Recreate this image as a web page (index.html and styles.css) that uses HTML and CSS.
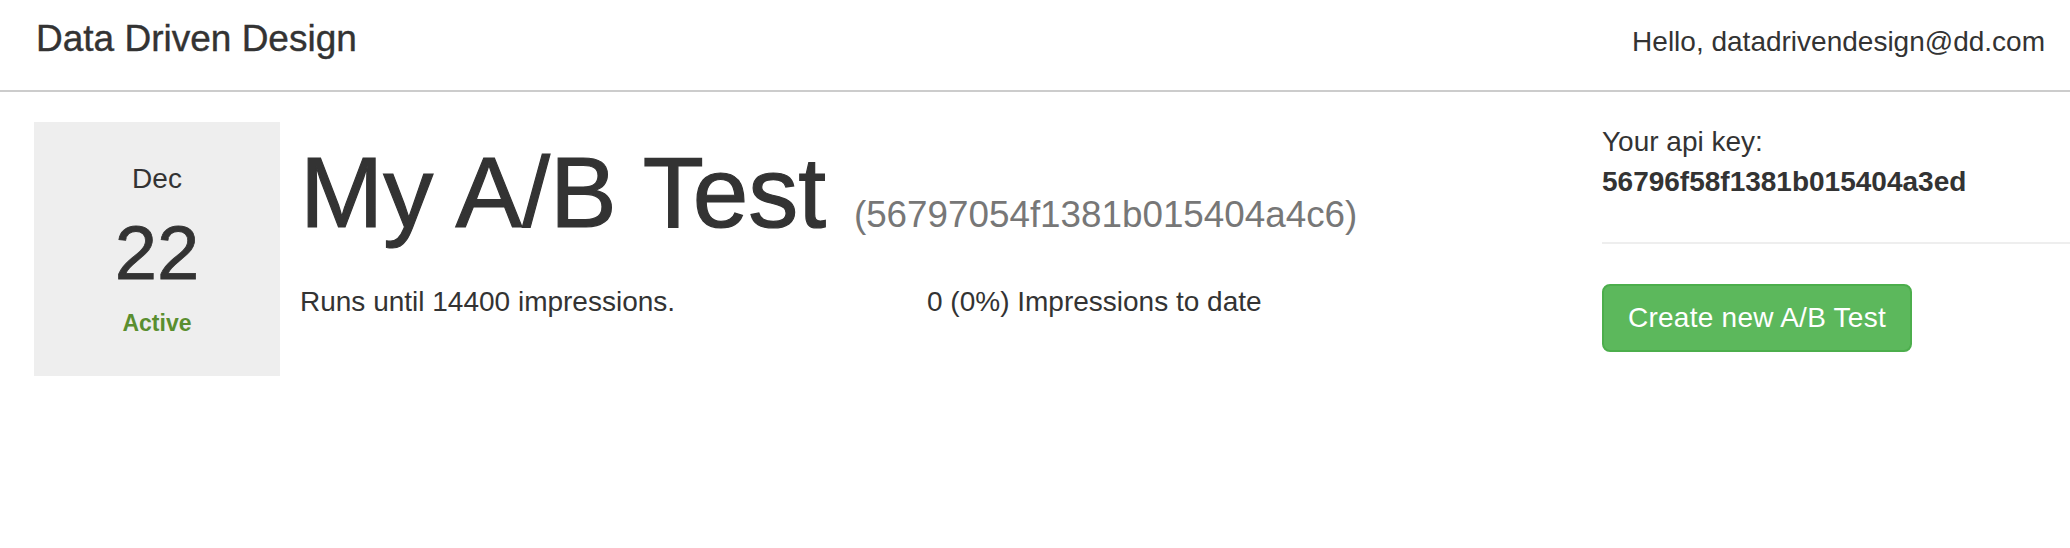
FILE: index.html
```html
<!DOCTYPE html>
<html lang="en">
<head>
<meta charset="utf-8">
<title>Data Driven Design</title>
<link rel="stylesheet" href="styles.css">
</head>
<body>
<header class="topbar">
  <div class="brand">Data Driven Design</div>
  <div class="greeting">Hello, datadrivendesign@dd.com</div>
</header>
<main class="page">
  <section class="test">
    <div class="datebox">
      <div class="month">Dec</div>
      <div class="day">22</div>
      <div class="status">Active</div>
    </div>
    <div class="test-body">
      <h1 class="test-title">My A/B Test <small class="test-id">(56797054f1381b015404a4c6)</small></h1>
      <div class="test-stats">
        <p>Runs until 14400 impressions.</p>
        <p>0 (0%) Impressions to date</p>
      </div>
    </div>
  </section>
  <aside class="sidebar">
    <p class="api">Your api key:<br><strong>56796f58f1381b015404a3ed</strong></p>
    <hr class="divider">
    <button class="btn-create" type="button">Create new A/B Test</button>
  </aside>
</main>
</body>
</html>
```
FILE: styles.css
```css
html, body {
  margin: 0;
  padding: 0;
  background: #fff;
}
body {
  font-family: "Liberation Sans", Arial, Helvetica, sans-serif;
  font-size: 28px;
  line-height: 40px;
  color: #333;
}
.topbar {
  display: flex;
  justify-content: space-between;
  align-items: baseline;
  height: 92px;
  box-sizing: border-box;
  padding: 19px 25px 0 36px;
  border-bottom: 2px solid #cccccc;
}
.brand {
  font-size: 37px;
  line-height: 40px;
  -webkit-text-stroke: 0.4px #333;
}
.greeting {
  font-size: 28px;
  line-height: 40px;
}
.page {
  display: flex;
  padding: 30px 0 0 34px;
}
.test {
  display: flex;
  flex: 1;
  gap: 20px;
}
.datebox {
  flex: none;
  width: 246px;
  height: 254px;
  box-sizing: border-box;
  padding-top: 37px;
  background: #eeeeee;
  text-align: center;
}
.month {
  font-size: 28px;
  line-height: 40px;
}
.day {
  margin-top: 16px;
  font-size: 76px;
  line-height: 76px;
  -webkit-text-stroke: 0.8px #333;
}
.status {
  margin-top: 17px;
  font-size: 23px;
  line-height: 30px;
  font-weight: bold;
  color: #5a8e2f;
}
.test-body {
  flex: 1;
}
.test-title {
  margin: 15px 0 0;
  font-size: 100px;
  line-height: 1.1;
  font-weight: normal;
  color: #333;
  -webkit-text-stroke: 1.2px #333;
}
.test-id {
  font-size: 36.8px;
  color: #777;
  -webkit-text-stroke: 0;
}
.test-stats {
  display: grid;
  grid-template-columns: 627px 1fr;
  margin-top: 35px;
}
.test-stats p {
  margin: 0;
}
.sidebar {
  flex: none;
  width: 468px;
}
.api {
  margin: 0;
}
.api strong {
  font-weight: bold;
}
.divider {
  height: 0;
  margin: 40px 0;
  border: 0;
  border-top: 2px solid #eeeeee;
}
.btn-create {
  display: inline-block;
  margin: 0;
  padding: 12px 24px;
  font-family: inherit;
  font-size: 28px;
  line-height: 40px;
  letter-spacing: 0.25px;
  color: #fff;
  background: #5cb85c;
  border: 2px solid #4cae4c;
  border-radius: 8px;
  cursor: pointer;
}
```
